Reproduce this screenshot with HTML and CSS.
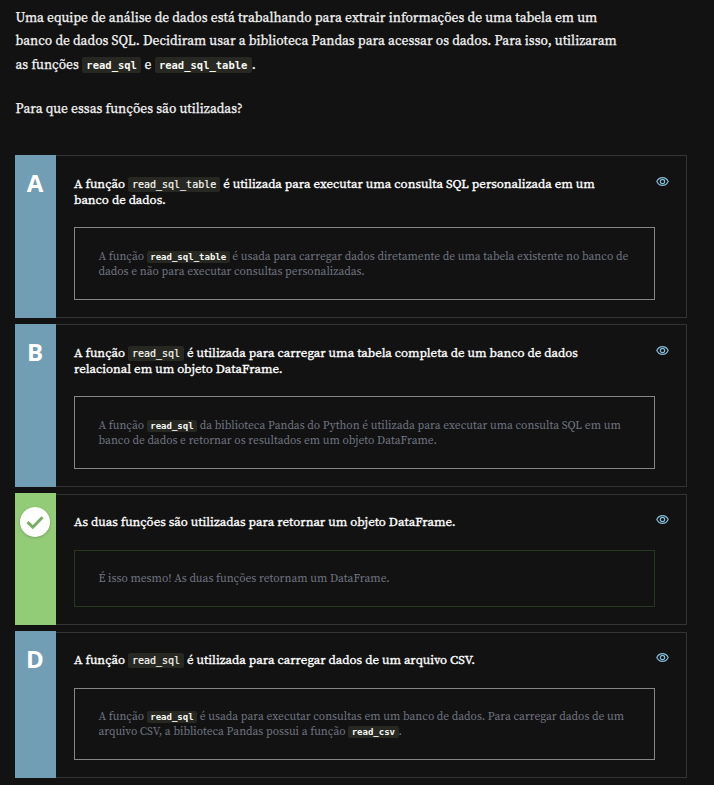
FILE: index.html
```html
<!DOCTYPE html>
<html lang="pt-BR">
<head>
<meta charset="utf-8">
<title>Questão</title>
<link rel="stylesheet" href="styles.css">
</head>
<body>
<main>
<section class="intro">
<p><span class="line">Uma equipe de análise de dados está trabalhando para extrair informações de uma tabela em um</span>
<span class="line">banco de dados SQL. Decidiram usar a biblioteca Pandas para acessar os dados. Para isso, utilizaram</span>
<span class="line">as funções <code>read_sql</code> e <code>read_sql_table</code>.</span></p>
<p><span class="line">Para que essas funções são utilizadas?</span></p>
</section>
<section class="options">
<article class="option tall">
<div class="letter">A</div>
<div class="body">
<p class="answer"><span class="line">A função <code>read_sql_table</code> é utilizada para executar uma consulta SQL personalizada em um</span>
<span class="line">banco de dados.</span></p>
<svg class="eye" viewBox="0 0 24 24"><path d="M1.5 12C6 2.500 18 2.500 22.500 12C18 21.500 6 21.500 1.500 12Z"/><circle cx="12" cy="12" r="4"/></svg>
<div class="note"><p><span class="line">A função <code>read_sql_table</code> é usada para carregar dados diretamente de uma tabela existente no banco de</span>
<span class="line">dados e não para executar consultas personalizadas.</span></p></div>
</div>
</article>
<article class="option tall">
<div class="letter">B</div>
<div class="body">
<p class="answer"><span class="line">A função <code>read_sql</code> é utilizada para carregar uma tabela completa de um banco de dados</span>
<span class="line">relacional em um objeto DataFrame.</span></p>
<svg class="eye" viewBox="0 0 24 24"><path d="M1.5 12C6 2.500 18 2.500 22.500 12C18 21.500 6 21.500 1.500 12Z"/><circle cx="12" cy="12" r="4"/></svg>
<div class="note"><p><span class="line">A função <code>read_sql</code> da biblioteca Pandas do Python é utilizada para executar uma consulta SQL em um</span>
<span class="line">banco de dados e retornar os resultados em um objeto DataFrame.</span></p></div>
</div>
</article>
<article class="option correct">
<div class="letter"><svg class="check" viewBox="0 0 30 30"><path d="M7.500 15.200L12.800 20.200L22.500 10.300"/></svg></div>
<div class="body">
<p class="answer"><span class="line">As duas funções são utilizadas para retornar um objeto DataFrame.</span></p>
<svg class="eye" viewBox="0 0 24 24"><path d="M1.5 12C6 2.500 18 2.500 22.500 12C18 21.500 6 21.500 1.500 12Z"/><circle cx="12" cy="12" r="4"/></svg>
<div class="note"><p><span class="line">É isso mesmo! As duas funções retornam um DataFrame.</span></p></div>
</div>
</article>
<article class="option last">
<div class="letter">D</div>
<div class="body">
<p class="answer"><span class="line">A função <code>read_sql</code> é utilizada para carregar dados de um arquivo CSV.</span></p>
<svg class="eye" viewBox="0 0 24 24"><path d="M1.5 12C6 2.500 18 2.500 22.500 12C18 21.500 6 21.500 1.500 12Z"/><circle cx="12" cy="12" r="4"/></svg>
<div class="note"><p><span class="line">A função <code>read_sql</code> é usada para executar consultas em um banco de dados. Para carregar dados de um</span>
<span class="line">arquivo CSV, a biblioteca Pandas possui a função <code>read_csv</code>.</span></p></div>
</div>
</article>
</section>
</main>
</body>
</html>
```
FILE: styles.css
```css
* { box-sizing: border-box; }
body { margin: 0; background: #121212; color: #f4f4f4; font-family: "Source Serif Pro", "Source Serif 4", "Liberation Serif", serif; }
p { margin: 0; }
main { width: 714px; height: 785px; overflow: hidden; padding: 6px 27px 0 15px; }
.line { display: block; white-space: nowrap; }
code { font-family: "DejaVu Sans Mono", monospace; line-height: 1; background: #272822; color: #f8f8f2; border-radius: 2px; -webkit-text-stroke: 0; }
.intro { height: 149px; padding-left: 0.5px; font-size: 13.5px; line-height: 23.3px; -webkit-text-stroke: .25px; }
.intro p + p { margin-top: 21.5px; }
.intro code { font-size: 10.5px; font-weight: 700; padding: 2px 4.4px; }
.options { display: grid; gap: 6px; }
.option { display: grid; grid-template-columns: 41px 1fr; }
.tall { height: 163px; }
.correct { height: 132px; }
.last { height: 147px; }
.letter { background: #719db5; color: #fff; font: 700 24px/28px "Open Sans", sans-serif; text-align: center; padding: 14px 1px 0 0; }
.body { border: 1px solid #333; border-left: 0; padding: 20px 31px 0 18px; position: relative; }
.correct .body, .last .body { margin-top: 1px; }
.correct .letter { background: #93cc76; }
.correct .body { padding-top: 19px; }
.last .body { padding-top: 19px; }
.answer { font-size: 12.82px; line-height: 16px; color: #fff; -webkit-text-stroke: .3px; }
.answer code { font-size: 10px; padding: 2px 4px; -webkit-text-stroke: .2px; }
.eye { position: absolute; right: 17px; top: 18.5px; width: 13px; height: 13px; fill: none; stroke: #83bad5; stroke-width: 2.2; }
.correct .eye, .last .eye { top: 18px; }
.note { margin-top: 19px; height: 73px; border: 1px solid #858585; padding: 21px 0 0 23.5px; color: #707480; font-size: 11.47px; line-height: 15px; }
.note code { font-size: 9px; font-weight: 700; padding: 1px 3.5px; }
.correct .note { height: 57px; margin-top: 20px; padding-top: 20px; border-color: #283820; }
.last .note { height: 72px; margin-top: 20px; padding-top: 20px; }
.check { width: 30px; height: 30px; border-radius: 50%; background: #fff; fill: none; stroke: #79ad64; stroke-width: 3; box-shadow: 0 1px 3px #0003; display: block; margin: 0 auto; }
```
